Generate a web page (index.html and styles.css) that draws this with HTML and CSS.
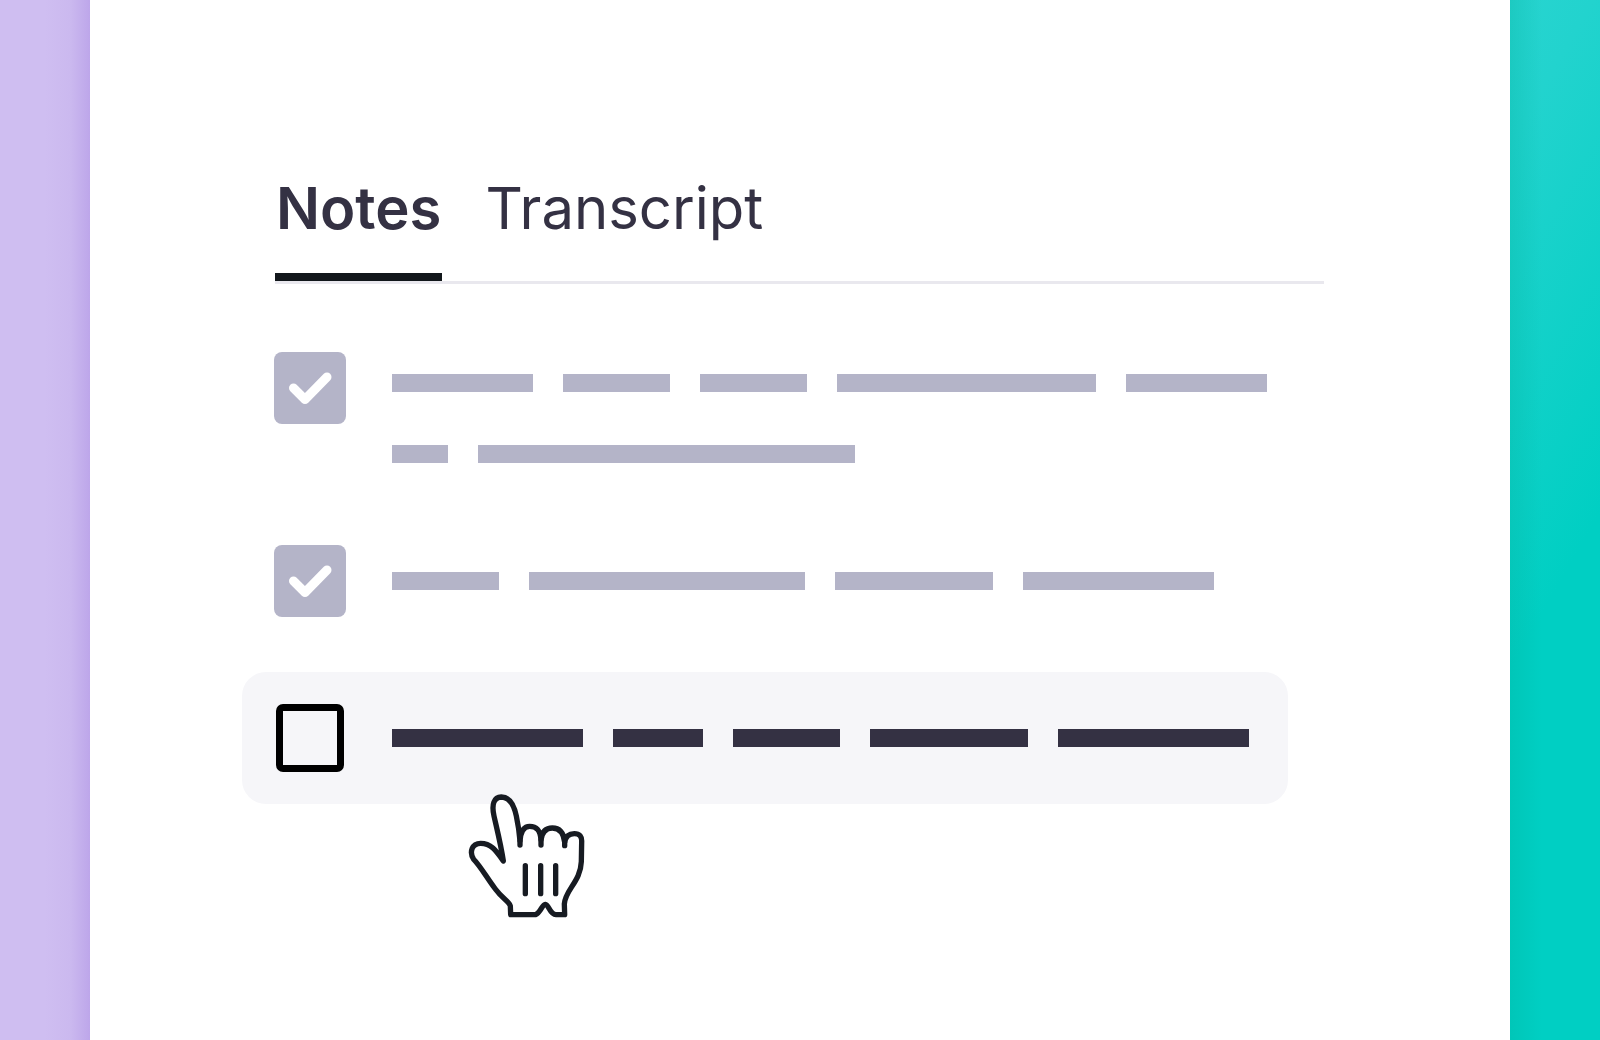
FILE: index.html
```html
<!DOCTYPE html>
<html lang="en">
<head>
    <meta charset="UTF-8">
    <meta name="viewport" content="width=device-width, initial-scale=1.0">
    <title>Notes</title>
    <link rel="stylesheet" href="styles.css">
</head>
<body>
    <div class="page">
        <div class="side side-left"></div>

        <main class="panel">
            <!-- Tabs -->
            <div class="tabs" role="tablist">
                <button class="tab active" type="button" role="tab" aria-selected="true">Notes</button>
                <button class="tab" type="button" role="tab" aria-selected="false">Transcript</button>
            </div>

            <!-- Checklist -->
            <div class="list">
                <label class="item item-multi">
                    <span class="check">
                        <input type="checkbox" checked>
                        <svg viewBox="0 0 72 72"><path d="M19.500 36 L31 47.500 L53 25"/></svg>
                    </span>
                    <span class="lines">
                        <span class="line">
                            <span class="bar w-141"></span>
                            <span class="bar w-107"></span>
                            <span class="bar w-107"></span>
                            <span class="bar w-259"></span>
                            <span class="bar w-141"></span>
                        </span>
                        <span class="line">
                            <span class="bar w-56"></span>
                            <span class="bar w-377"></span>
                        </span>
                    </span>
                </label>

                <label class="item">
                    <span class="check">
                        <input type="checkbox" checked>
                        <svg viewBox="0 0 72 72"><path d="M19.500 36 L31 47.500 L53 25"/></svg>
                    </span>
                    <span class="lines">
                        <span class="line">
                            <span class="bar w-107"></span>
                            <span class="bar w-276"></span>
                            <span class="bar w-158"></span>
                            <span class="bar w-191"></span>
                        </span>
                    </span>
                </label>

                <label class="item item-hover">
                    <span class="check">
                        <input type="checkbox">
                    </span>
                    <span class="lines">
                        <span class="line">
                            <span class="bar w-191"></span>
                            <span class="bar w-90"></span>
                            <span class="bar w-107"></span>
                            <span class="bar w-158"></span>
                            <span class="bar w-191"></span>
                        </span>
                    </span>
                    <svg class="cursor" viewBox="0 0 510 450">
                        <path class="hand" d="M190 243 C183 195 171 148 162 108 C154 72 162 52 184 51 C207 51 222 75 229 108 C234 132 238 155 240 183 C242 155 251 139 269 139 C290 139 301 151 303 180 C306 155 317 144 337 144 C359 144 371 158 374 187 C377 170 387 161 403 161 C419 161 426 170 425 186 L424 245 C422 305 375 330 373 372 L374 404 L348 404 C329 403 327 374 316 373 C305 374 303 398 286 404 L212 404 L211 378 C208 364 187 356 166 327 C143 297 119 255 101 238 C87 216 96 190 122 190 C153 190 168 212 190 243 Z"/>
                        <path d="M240 183 V195 M303 180 V195 M374 187 V197 M256 257 V341 M302 257 V341 M347 257 V341"/>
                    </svg>
                </label>
            </div>
        </main>

        <div class="side side-right"></div>
    </div>
</body>
</html>
```

FILE: styles.css
```css
* {
    box-sizing: border-box;
}
body {
    margin: 0;
    font-family: Inter, "Liberation Sans", sans-serif;
    color: #343143;
}
.page {
    display: flex;
    min-height: 100vh;
}
.side {
    flex: 0 0 90px;
}
.side-left {
    background: linear-gradient(to right, #cfbef1 50%, #cbb9ef 78%, #bda6ea 100%);
}
.side-right {
    background:
        linear-gradient(to right, rgba(0, 175, 155, 0.28), rgba(0, 175, 155, 0) 32px),
        linear-gradient(120deg, #28d4d0 0%, #22d3ce 12%, #00cfc3 56%);
}
.panel {
    flex: 1;
    min-width: 0;
    padding: 173px 186px 40px 184px;
    background-color: #fff;
}

/* Tabs */
.tabs {
    display: flex;
    gap: 42px;
    margin-left: 1px;
    border-bottom: 3px solid #e9e8ee;
}
.tab {
    padding: 0 1px 30px;
    border: none;
    border-bottom: 8px solid transparent;
    background: none;
    color: inherit;
    font-family: inherit;
    font-size: 58px;
    line-height: 70px;
    cursor: pointer;
}
.tab.active {
    border-bottom-color: #12171b;
    font-weight: 600;
}

/* Checklist */
.list {
    display: flex;
    flex-direction: column;
    gap: 25px;
    margin: 38px 36px 0 -32px;
}
.item {
    display: flex;
    align-items: center;
    gap: 46px;
    padding: 30px 20px 30px 32px;
    border-radius: 24px;
    color: #b4b4c8;
}
.item-multi {
    align-items: flex-start;
    padding-bottom: 27px;
}
.item-multi .lines {
    margin-top: 22px;
}
.item-hover {
    position: relative;
    background-color: #f6f6f9;
    color: #343143;
}
.check {
    display: grid;
    flex: none;
    place-items: center;
    width: 72px;
    height: 72px;
}
.check input,
.check svg {
    grid-area: 1 / 1;
}
.check input {
    appearance: none;
    width: 68px;
    height: 68px;
    margin: 0;
    border: 7px solid #000;
    border-radius: 7px;
}
.check input:checked {
    width: 72px;
    height: 72px;
    border: none;
    border-radius: 8px;
    background-color: #b4b4c8;
}
.check svg {
    width: 72px;
    height: 72px;
    fill: none;
    stroke: #fff;
    stroke-width: 9;
    stroke-linecap: round;
    stroke-linejoin: round;
    pointer-events: none;
}
.lines {
    display: flex;
    flex-direction: column;
    gap: 53px;
}
.line {
    display: flex;
    gap: 30px;
}
.bar {
    height: 18px;
    background-color: currentColor;
}
.w-56 { width: 56px; }
.w-90 { width: 90px; }
.w-107 { width: 107px; }
.w-141 { width: 141px; }
.w-158 { width: 158px; }
.w-191 { width: 191px; }
.w-259 { width: 259px; }
.w-276 { width: 276px; }
.w-377 { width: 377px; }

/* Hand pointer over the hovered row */
.cursor {
    position: absolute;
    top: 108px;
    left: 198px;
    width: 170px;
    height: 150px;
    fill: none;
    stroke: #171b22;
    stroke-width: 16;
    stroke-linecap: round;
    stroke-linejoin: round;
    pointer-events: none;
}
.cursor .hand {
    fill: #fff;
}
```
